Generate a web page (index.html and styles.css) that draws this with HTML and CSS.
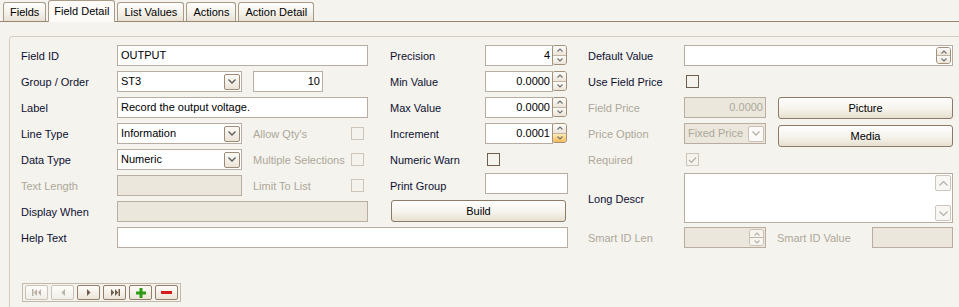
FILE: index.html
```html
<!DOCTYPE html>
<html lang="en">
<head>
  <meta charset="UTF-8">
  <title>Field Detail</title>
  <link rel="stylesheet" href="styles.css">
</head>
<body>
  <div class="tabs">
    <div class="tab">Fields</div>
    <div class="tab active">Field Detail</div>
    <div class="tab">List Values</div>
    <div class="tab">Actions</div>
    <div class="tab">Action Detail</div>
  </div>

  <div class="panel">
    <div class="form">
      <!-- row 1 -->
      <span class="lbl ca r1">Field ID</span>
      <div class="field cb-wide r1">OUTPUT</div>
      <span class="lbl cg r1">Precision</span>
      <div class="spin ch r1">
        <div class="field num">4</div>
        <span class="updown"><i><svg width="6" height="4"><polyline points="0.5,3.5 3,1 5.5,3.5"/></svg></i><i><svg width="6" height="4"><polyline points="0.5,0.5 3,3 5.5,0.5"/></svg></i></span>
      </div>
      <span class="lbl cj r1">Default Value</span>
      <div class="field ck-wide r1 inner-spin">
        <span class="updown small"><i><svg width="6" height="4"><polyline points="0.5,3.5 3,1 5.5,3.5"/></svg></i><i><svg width="6" height="4"><polyline points="0.5,0.5 3,3 5.5,0.5"/></svg></i></span>
      </div>

      <!-- row 2 -->
      <span class="lbl ca r2">Group / Order</span>
      <div class="field select cb r2">ST3<span class="drop"><svg width="8" height="5"><polyline points="0.5,0.5 4,4 7.5,0.5"/></svg></span></div>
      <div class="field num order cd r2">10</div>
      <span class="lbl cg r2">Min Value</span>
      <div class="spin ch r2">
        <div class="field num">0.0000</div>
        <span class="updown"><i><svg width="6" height="4"><polyline points="0.5,3.5 3,1 5.5,3.5"/></svg></i><i><svg width="6" height="4"><polyline points="0.5,0.5 3,3 5.5,0.5"/></svg></i></span>
      </div>
      <span class="lbl cj r2">Use Field Price</span>
      <span class="chk ck r2"></span>

      <!-- row 3 -->
      <span class="lbl ca r3">Label</span>
      <div class="field cb-wide r3">Record the output voltage.</div>
      <span class="lbl cg r3">Max Value</span>
      <div class="spin ch r3">
        <div class="field num">0.0000</div>
        <span class="updown"><i><svg width="6" height="4"><polyline points="0.5,3.5 3,1 5.5,3.5"/></svg></i><i><svg width="6" height="4"><polyline points="0.5,0.5 3,3 5.5,0.5"/></svg></i></span>
      </div>
      <span class="lbl off cj r3">Field Price</span>
      <div class="field num off ck r3">0.0000</div>
      <button class="btn cm r3">Picture</button>

      <!-- row 4 -->
      <span class="lbl ca r4">Line Type</span>
      <div class="field select cb r4">Information<span class="drop"><svg width="8" height="5"><polyline points="0.5,0.5 4,4 7.5,0.5"/></svg></span></div>
      <span class="lbl off cd r4">Allow Qty's</span>
      <span class="chk off ce r4"></span>
      <span class="lbl cg r4">Increment</span>
      <div class="spin ch r4">
        <div class="field num">0.0001</div>
        <span class="updown"><i><svg width="6" height="4"><polyline points="0.5,3.5 3,1 5.5,3.5"/></svg></i><i class="hot"><svg width="6" height="4"><polyline points="0.5,0.5 3,3 5.5,0.5"/></svg></i></span>
      </div>
      <span class="lbl off cj r4">Price Option</span>
      <div class="field select off ck r4">Fixed Price<span class="drop"><svg width="8" height="5"><polyline points="0.5,0.5 4,4 7.5,0.5"/></svg></span></div>
      <button class="btn media cm r4">Media</button>

      <!-- row 5 -->
      <span class="lbl ca r5">Data Type</span>
      <div class="field select cb r5">Numeric<span class="drop"><svg width="8" height="5"><polyline points="0.5,0.5 4,4 7.5,0.5"/></svg></span></div>
      <span class="lbl off cd r5">Multiple Selections</span>
      <span class="chk off ce r5"></span>
      <span class="lbl cg r5">Numeric Warn</span>
      <span class="chk ch r5"></span>
      <span class="lbl off cj r5">Required</span>
      <span class="chk off ck r5"><svg width="9" height="8"><polyline points="1,4 3.5,6.5 8,1.5"/></svg></span>

      <!-- row 6 -->
      <span class="lbl off ca r6">Text Length</span>
      <div class="field off cb r6"></div>
      <span class="lbl off cd r6">Limit To List</span>
      <span class="chk off ce r6"></span>
      <span class="lbl cg r6">Print Group</span>
      <div class="field print ch r6"></div>
      <span class="lbl cj r6-7">Long Descr</span>
      <div class="field memo ck-wide r6-7">
        <span class="sb"><svg width="9" height="5"><polyline points="0.5,4.5 4.5,0.5 8.5,4.5"/></svg></span>
        <span class="sb"><svg width="9" height="5"><polyline points="0.5,0.5 4.5,4.5 8.5,0.5"/></svg></span>
      </div>

      <!-- row 7 -->
      <span class="lbl ca r7">Display When</span>
      <div class="field off cb-wide r7"></div>
      <button class="btn build cg-wide r7">Build</button>

      <!-- row 8 -->
      <span class="lbl ca r8">Help Text</span>
      <div class="field cb-help r8"></div>
      <span class="lbl off cj r8">Smart ID Len</span>
      <div class="field off ck r8 inner-spin">
        <span class="updown small off"><i><svg width="6" height="4"><polyline points="0.5,3.5 3,1 5.5,3.5"/></svg></i><i><svg width="6" height="4"><polyline points="0.5,0.5 3,3 5.5,0.5"/></svg></i></span>
      </div>
      <span class="lbl off cm1 r8">Smart ID Value</span>
      <div class="field off cn r8"></div>
    </div>

    <div class="nav">
      <button class="off"><svg width="10" height="7"><rect x="0" y="0" width="1.5" height="7"/><polygon points="5,0 1.8,3.5 5,7"/><polygon points="9,0 5.8,3.5 9,7"/></svg></button>
      <button class="off"><svg width="4" height="7"><polygon points="4,0 0.5,3.5 4,7"/></svg></button>
      <button><svg width="4" height="7"><polygon points="0,0 3.5,3.5 0,7"/></svg></button>
      <button><svg width="10" height="7"><polygon points="1,0 4.2,3.5 1,7"/><polygon points="5,0 8.2,3.5 5,7"/><rect x="8.5" y="0" width="1.5" height="7"/></svg></button>
      <button class="add"><svg width="10" height="10"><rect x="3.5" y="0" width="3" height="10"/><rect x="0" y="3.5" width="10" height="3"/></svg></button>
      <button class="del"><svg width="11" height="3"><rect x="0" y="0" width="11" height="3"/></svg></button>
    </div>
  </div>
</body>
</html>
```

FILE: styles.css
```css
body {
  margin: 0;
  height: 307px;
  overflow: hidden;
  background: #f5f3ee;
  font-family: "Liberation Sans", Arial, sans-serif;
  font-size: 11px;
  color: #0c1030;
}

/* tab strip */
.tabs {
  display: flex;
  align-items: flex-end;
  height: 21px;
  padding-left: 3px;
  border-bottom: 1px solid #968672;
}
.tab {
  height: 18px;
  line-height: 18px;
  padding: 0 6px;
  margin-right: 2px;
  border: 1px solid #aa9a88;
  border-bottom: none;
  border-radius: 3px 3px 0 0;
  background: linear-gradient(#fefefd, #f3f0e8 60%, #e8e2d4);
  color: #000;
}
.tab.active {
  height: 21px;
  line-height: 20px;
  margin-bottom: -1px;
  padding: 0 5px;
  background: #fcfbf8;
}

/* panel */
.panel {
  margin: 14px -30px 0 9px;
  height: 262px;
  padding: 8px 0 0 11px;
  border: 1px solid #d4ccc0;
  border-radius: 3px 0 0 0;
}
.form {
  display: grid;
  grid-template-columns: 96px 125px 11px 98px 17px 22px 95px 83px 20px 96px 82px 12px 94px 81px;
  grid-template-rows: repeat(8, 21px);
  row-gap: 5px;
  align-items: center;
}

.ca { grid-column: 1; }
.cb { grid-column: 2; }
.cb-wide { grid-column: 2 / 6; }
.cb-help { grid-column: 2 / 9; }
.cd { grid-column: 4; }
.ce { grid-column: 5; }
.cg { grid-column: 7; }
.cg-wide { grid-column: 7 / 9; }
.ch { grid-column: 8; }
.cj { grid-column: 10; }
.ck { grid-column: 11; }
.ck-wide { grid-column: 11 / 15; }
.cm { grid-column: 13 / 15; }
.cm1 { grid-column: 13; margin-left: -1px; }
.cn { grid-column: 14; }
.r1 { grid-row: 1; }
.r2 { grid-row: 2; }
.r3 { grid-row: 3; }
.r4 { grid-row: 4; }
.r5 { grid-row: 5; }
.r6 { grid-row: 6; }
.r7 { grid-row: 7; }
.r8 { grid-row: 8; }
.r6-7 { grid-row: 6 / 8; }

.lbl { white-space: nowrap; }
.lbl.off { color: #aca899; }

/* text boxes */
.field {
  box-sizing: border-box;
  height: 21px;
  line-height: 19px;
  padding: 0 3px;
  border: 1px solid #b9ada1;
  background: #fff;
  color: #000;
  white-space: nowrap;
  overflow: hidden;
}
.field.off {
  background: #ebe7dd;
  color: #aca899;
}
.num { text-align: right; padding-right: 2px; }
.order { width: 70px; }
.print { align-self: start; margin-top: -2px; }

.select {
  display: flex;
  justify-content: space-between;
  align-items: center;
  padding-right: 1px;
}
.drop {
  box-sizing: border-box;
  width: 16px;
  height: 16px;
  display: flex;
  align-items: center;
  justify-content: center;
  border: 1px solid #9c8b78;
  border-radius: 2px;
  background: linear-gradient(#fbfaf6, #ebe5d8);
}
.drop polyline {
  fill: none;
  stroke: #5a5a5a;
  stroke-width: 1.3;
}
.select.off .drop {
  border-color: #c9c1b6;
  background: #fbfaf8;
}
.select.off .drop polyline { stroke: #b6b0a6; }

/* spin boxes */
.spin {
  display: flex;
  width: 82px;
}
.spin .field { flex: 1; }
.updown {
  box-sizing: border-box;
  width: 15px;
  height: 20px;
  margin-left: -1px;
  display: flex;
  flex-direction: column;
  border: 1px solid #a29079;
  border-radius: 3px;
  overflow: hidden;
}
.updown i {
  flex: 1;
  display: flex;
  align-items: center;
  justify-content: center;
  background: linear-gradient(#fcfbf8, #ece6d9);
}
.updown i + i { border-top: 1px solid #c2b5a4; }
.updown i.hot { background: linear-gradient(#fdecb8, #f5bc55); }
.updown polyline {
  fill: none;
  stroke: #6f6f6f;
  stroke-width: 1.1;
}
.inner-spin {
  display: flex;
  justify-content: flex-end;
  align-items: center;
  padding-right: 1px;
}
.updown.small {
  width: 15px;
  height: 17px;
  margin: 0;
}
.updown.off { border-color: #c9c1b6; }
.updown.off i { background: #f7f5f0; }
.updown.off polyline { stroke: #b6b0a6; }

/* memo */
.memo {
  align-self: start;
  height: 50px;
  margin-top: -2px;
  padding: 1px 1px;
  display: flex;
  flex-direction: column;
  align-items: flex-end;
  justify-content: space-between;
}
.sb {
  box-sizing: border-box;
  width: 16px;
  height: 16px;
  display: flex;
  align-items: center;
  justify-content: center;
  border: 1px solid #cdc6bc;
  border-radius: 2px;
  background: #f8f7f3;
}
.sb polyline {
  fill: none;
  stroke: #b4aea5;
  stroke-width: 1.1;
}

/* check boxes */
.chk {
  box-sizing: border-box;
  width: 13px;
  height: 13px;
  border: 1px solid #6f5e4d;
  display: flex;
  align-items: center;
  justify-content: center;
}
.ck.chk, .ch.chk { margin-left: 2px; }
.chk.off { border-color: #cdc5ba; }
.chk polyline {
  fill: none;
  stroke: #b4aea5;
  stroke-width: 1.2;
}

/* push buttons */
.btn {
  box-sizing: border-box;
  height: 22px;
  padding: 0;
  border: 1px solid #8b7a68;
  border-radius: 3px;
  background: linear-gradient(#fefefd, #f6f3ec 55%, #e7e0d0);
  font: inherit;
  color: #000;
}
.media { align-self: start; margin-top: 2px; }
.build {
  align-self: start;
  margin: -1px 2px 0 1px;
}

/* record navigator */
.nav {
  display: inline-flex;
  gap: 3px;
  margin: 35px 0 0 1px;
  padding: 1px 2px;
  border: 1px solid #c3b9ad;
}
.nav button {
  box-sizing: border-box;
  width: 23px;
  height: 15px;
  padding: 0;
  display: flex;
  align-items: center;
  justify-content: center;
  border: 1px solid #917f6c;
  border-radius: 2px;
  background: linear-gradient(#fdfcf9, #ebe5d7);
}
.nav button svg { fill: #6e5d4c; }
.nav button.off {
  border-color: #cbc3b8;
  background: linear-gradient(#fdfdfb, #f1eee7);
}
.nav button.off svg { fill: #b9b1a6; }
.nav .add svg { fill: #2f9a13; }
.nav .del svg { fill: #d41c1c; }
```
